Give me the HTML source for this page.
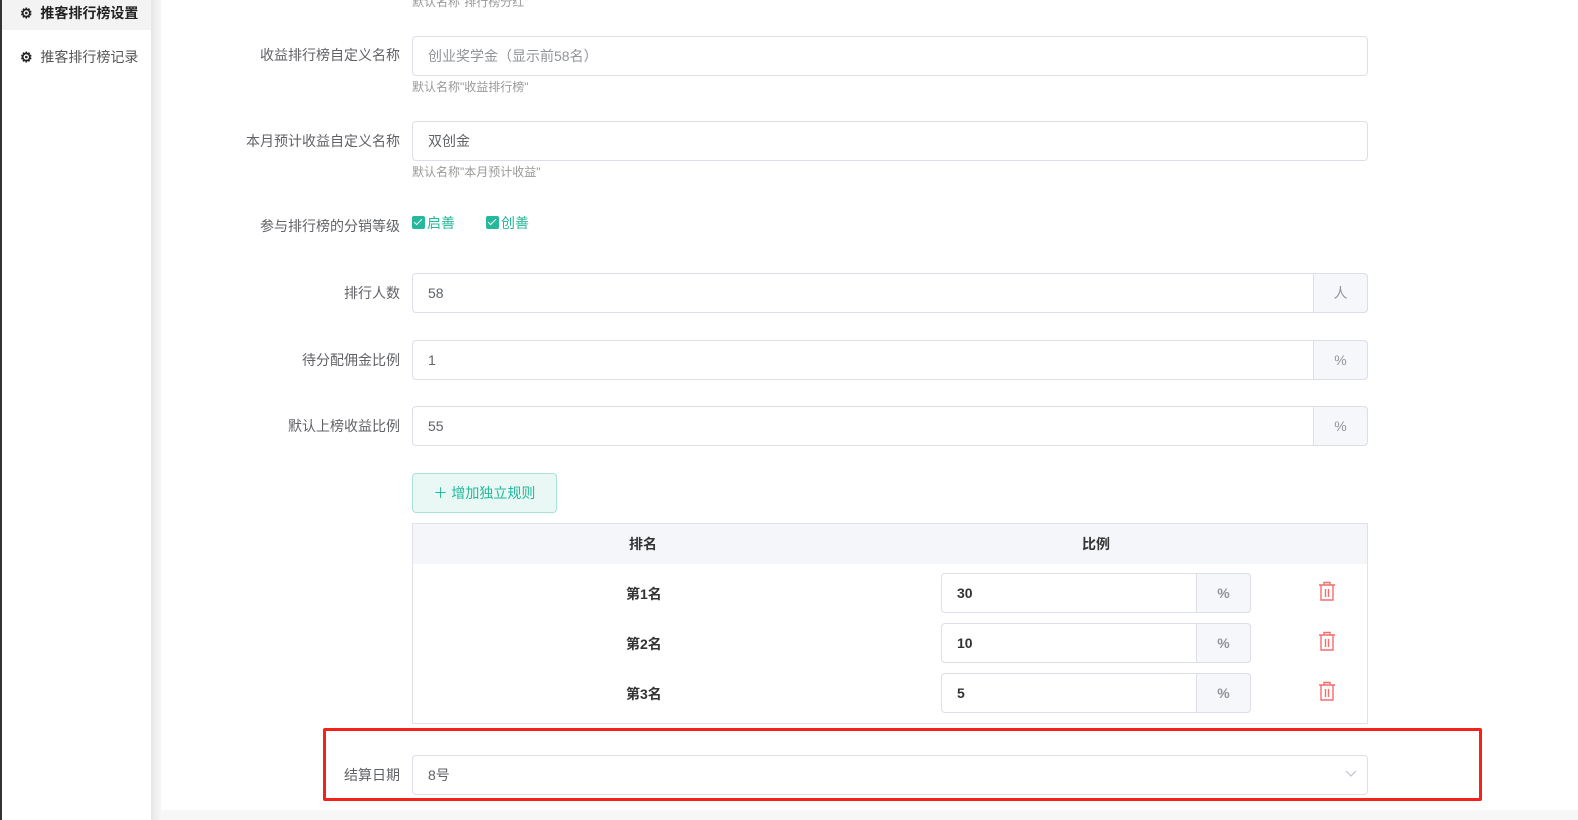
<!DOCTYPE html>
<html><head><meta charset="utf-8"><style>
*{box-sizing:border-box;margin:0;padding:0}
body{width:1578px;height:820px;overflow:hidden;background:#fff;font-family:"Liberation Sans","Noto Sans CJK SC",sans-serif;position:relative;color:#606266}
.a{position:absolute}
.lbl{position:absolute;right:1178px;font-size:14px;color:#606266;white-space:nowrap;line-height:20px}
.inp{position:absolute;left:412px;width:956px;height:40px;border:1px solid #dcdfe6;border-radius:4px;font-size:14px;line-height:38px;padding-left:15px;color:#606266}
.hint{position:absolute;left:412px;font-size:12px;color:#999;line-height:14px}
.app{position:absolute;right:-1px;top:-1px;width:55px;height:40px;background:#f5f7fa;border:1px solid #dcdfe6;border-radius:0 4px 4px 0;text-align:center;line-height:38px;color:#909399}
.cb{display:inline-block;width:13px;height:13px;background:#23b99a;border-radius:2px;vertical-align:-1px;position:relative;margin-right:2px}
.cb:after{content:"";position:absolute;left:4px;top:1px;width:3px;height:7px;border:solid #fff;border-width:0 1.5px 1.5px 0;transform:rotate(45deg)}
.row{position:absolute;left:413px;width:954px;height:50px}
.rk{position:absolute;left:213px;font-weight:bold;color:#333;font-size:14px}
.ti{position:absolute;left:528px;width:310px;height:40px;border:1px solid #dcdfe6;border-radius:4px;font-weight:bold;color:#333;font-size:14px;line-height:38px;padding-left:15px}
.ti .app{width:55px}
</style></head><body>
<div class="a" style="left:0;top:0;width:2px;height:820px;background:#333"></div>
<div class="a" style="left:2px;top:0;width:149px;height:820px;background:#fff"></div>
<div class="a" style="left:151px;top:0;width:10px;height:820px;background:linear-gradient(90deg,#e6e6e6,#f7f7f7)"></div>
<div class="a" style="left:2px;top:0;width:149px;height:30px;background:#f3f3f3"></div>
<div class="a" style="left:20px;top:3px;font-size:14px;font-weight:bold;color:#222">⚙&nbsp; 推客排行榜设置</div>
<div class="a" style="left:20px;top:47px;font-size:14px;color:#555"><b style="color:#222">⚙</b>&nbsp; 推客排行榜记录</div>
<div class="a" style="left:161px;top:810px;width:1417px;height:10px;background:#f7f7f7"></div>

<div class="hint" style="top:-5px">默认名称"排行榜分红"</div>
<div class="lbl" style="top:45px">收益排行榜自定义名称</div>
<div class="inp" style="top:36px;color:#909399">创业奖学金（显示前58名）</div>
<div class="hint" style="top:80px">默认名称"收益排行榜"</div>
<div class="lbl" style="top:131px">本月预计收益自定义名称</div>
<div class="inp" style="top:121px">双创金</div>
<div class="hint" style="top:165px">默认名称"本月预计收益"</div>
<div class="lbl" style="top:216px">参与排行榜的分销等级</div>
<div class="a" style="left:412px;top:213px;font-size:14px;color:#23b99a"><span class="cb"></span>启善</div>
<div class="a" style="left:486px;top:213px;font-size:14px;color:#23b99a"><span class="cb"></span>创善</div>
<div class="lbl" style="top:283px">排行人数</div>
<div class="inp" style="top:273px">58<div class="app">人</div></div>
<div class="lbl" style="top:350px">待分配佣金比例</div>
<div class="inp" style="top:340px">1<div class="app">%</div></div>
<div class="lbl" style="top:416px">默认上榜收益比例</div>
<div class="inp" style="top:406px">55<div class="app">%</div></div>
<div class="a" style="left:412px;top:473px;width:145px;height:40px;border:1px solid #a7e3d6;background:#e9f8f5;border-radius:4px;color:#23b99a;font-size:14px;line-height:38px;text-align:center">＋ 增加独立规则</div>
<div class="a" style="left:412px;top:523px;width:956px;height:201px;border:1px solid #e0e2e8"></div>
<div class="a" style="left:413px;top:524px;width:954px;height:40px;background:#f5f6fa;font-weight:bold;color:#333;font-size:14px;line-height:40px"><span class="a" style="left:216px">排名</span><span class="a" style="left:669px">比例</span></div>
<div class="row" style="top:573px"><span class="rk" style="top:11px">第1名</span><div class="ti">30<div class="app">%</div></div></div>
<div class="row" style="top:623px"><span class="rk" style="top:11px">第2名</span><div class="ti">10<div class="app">%</div></div></div>
<div class="row" style="top:673px"><span class="rk" style="top:11px">第3名</span><div class="ti">5<div class="app">%</div></div></div>
<svg class="a" style="left:1318px;top:581px" width="18" height="20" viewBox="0 0 18 20" fill="none" stroke="#f56c6c" stroke-width="1.4"><path d="M1 4h16M6 4V1.5h6V4M3 4v15h12V4M7.5 8v8M10.5 8v8"/></svg>
<svg class="a" style="left:1318px;top:631px" width="18" height="20" viewBox="0 0 18 20" fill="none" stroke="#f56c6c" stroke-width="1.4"><path d="M1 4h16M6 4V1.5h6V4M3 4v15h12V4M7.5 8v8M10.5 8v8"/></svg>
<svg class="a" style="left:1318px;top:681px" width="18" height="20" viewBox="0 0 18 20" fill="none" stroke="#f56c6c" stroke-width="1.4"><path d="M1 4h16M6 4V1.5h6V4M3 4v15h12V4M7.5 8v8M10.5 8v8"/></svg>
<div class="lbl" style="top:765px">结算日期</div>
<div class="inp" style="top:755px">8号<svg class="a" style="right:10px;top:14px" width="12" height="8" viewBox="0 0 12 8" fill="none" stroke="#c0c4cc" stroke-width="1.2"><path d="M1 1l5 5 5-5"/></svg></div>
<div class="a" style="left:323px;top:728px;width:1159px;height:73px;border:3px solid #f5221b;border-radius:2px"></div>
</body></html>
